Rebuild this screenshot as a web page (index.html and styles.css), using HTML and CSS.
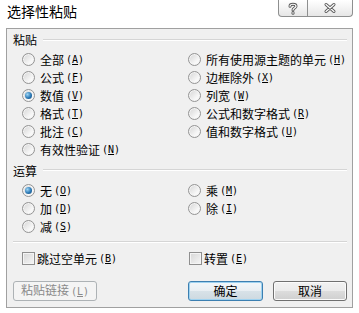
FILE: index.html
```html
<!DOCTYPE html>
<html lang="zh-CN">
<head>
    <meta charset="UTF-8">
    <title>选择性粘贴</title>
    <link rel="stylesheet" href="styles.css">
</head>
<body>
    <div class="window">
        <div class="titlebar">
            <span class="title">选择性粘贴</span>
            <div class="caption">
                <div class="cap cap-help">
                    <svg width="12" height="13" viewBox="0 0 12 13">
                        <path class="ol" d="M3 4.2 C3 1.6 9 1.6 9 4.2 C9 6 6 6 6 8" />
                        <path class="in" d="M3 4.2 C3 1.6 9 1.6 9 4.2 C9 6 6 6 6 8" />
                        <path class="ol" d="M6 10.6 v0.6" />
                        <path class="in" d="M6 10.6 v0.6" />
                    </svg>
                </div>
                <div class="cap cap-close">
                    <svg width="14" height="12" viewBox="0 0 14 12">
                        <path class="ol" d="M3 2.5 L11 9.5 M11 2.5 L3 9.5" />
                        <path class="in" d="M3 2.5 L11 9.5 M11 2.5 L3 9.5" />
                    </svg>
                </div>
            </div>
        </div>

        <div class="panel">
            <div class="group-head"><span>粘贴</span></div>
            <div class="options">
                <label class="opt"><span class="radio"></span>全部<span class="key">(<u>A</u>)</span></label>
                <label class="opt"><span class="radio"></span>所有使用源主题的单元<span class="key">(<u>H</u>)</span></label>
                <label class="opt"><span class="radio"></span>公式<span class="key">(<u>F</u>)</span></label>
                <label class="opt"><span class="radio"></span>边框除外<span class="key">(<u>X</u>)</span></label>
                <label class="opt"><span class="radio checked"></span>数值<span class="key">(<u>V</u>)</span></label>
                <label class="opt"><span class="radio"></span>列宽<span class="key">(<u>W</u>)</span></label>
                <label class="opt"><span class="radio"></span>格式<span class="key">(<u>T</u>)</span></label>
                <label class="opt"><span class="radio"></span>公式和数字格式<span class="key">(<u>R</u>)</span></label>
                <label class="opt"><span class="radio"></span>批注<span class="key">(<u>C</u>)</span></label>
                <label class="opt"><span class="radio"></span>值和数字格式<span class="key">(<u>U</u>)</span></label>
                <label class="opt"><span class="radio"></span>有效性验证<span class="key">(<u>N</u>)</span></label>
            </div>

            <div class="group-head second"><span>运算</span></div>
            <div class="options">
                <label class="opt"><span class="radio checked"></span>无<span class="key">(<u>O</u>)</span></label>
                <label class="opt"><span class="radio"></span>乘<span class="key">(<u>M</u>)</span></label>
                <label class="opt"><span class="radio"></span>加<span class="key">(<u>D</u>)</span></label>
                <label class="opt"><span class="radio"></span>除<span class="key">(<u>I</u>)</span></label>
                <label class="opt"><span class="radio"></span>减<span class="key">(<u>S</u>)</span></label>
            </div>

            <div class="divider"></div>

            <div class="options checks">
                <label class="opt"><span class="check"></span>跳过空单元<span class="key">(<u>B</u>)</span></label>
                <label class="opt"><span class="check"></span>转置<span class="key">(<u>E</u>)</span></label>
            </div>

            <div class="actions">
                <button class="btn disabled" disabled>粘贴链接<span class="key">(<u>L</u>)</span></button>
                <span class="spacer"></span>
                <button class="btn default ok">确定</button>
                <button class="btn cancel">取消</button>
            </div>
        </div>
    </div>
</body>
</html>
```

FILE: styles.css
```css
body {
    margin: 0;
    background-color: #fff;
    font-family: "Noto Sans CJK SC", "Liberation Sans", sans-serif;
    font-size: 12px;
    color: #000;
}

.window {
    width: 359px;
    height: 313px;
}

.titlebar {
    height: 28px;
    display: flex;
    justify-content: space-between;
    align-items: flex-start;
}

.title {
    padding-left: 7px;
    font-size: 14px;
    line-height: 23px;
}

.caption {
    display: flex;
    margin-right: 6px;
}

.cap {
    height: 17px;
    display: flex;
    align-items: center;
    justify-content: center;
    border: 1px solid #8e8f8f;
    border-top: none;
    background: linear-gradient(#ffffff, #f3f3f3 50%, #e6e6e6);
    box-sizing: border-box;
}

.cap-help {
    width: 30px;
    border-radius: 0 0 0 4px;
}

.cap-close {
    width: 45px;
    border-left: none;
    border-radius: 0 0 4px 0;
}

.cap svg {
    display: block;
}

.cap .ol {
    fill: none;
    stroke: #5a5a5a;
    stroke-width: 3;
    stroke-linecap: round;
}

.cap .in {
    fill: none;
    stroke: #fff;
    stroke-width: 1.2;
    stroke-linecap: round;
}

.panel {
    margin: 0 6px;
    height: 280px;
    box-sizing: border-box;
    border: 1px solid #a0a0a0;
    background-color: #f0f0f0;
    padding: 0 5px 0 6px;
}

.group-head {
    height: 21px;
    display: flex;
    align-items: center;
    gap: 6px;
}

.group-head::after {
    content: "";
    flex: 1;
    border-top: 1px solid #d5d5d5;
    border-bottom: 1px solid #fff;
    margin-right: 0;
}

.group-head.second {
    height: 22px;
    margin-top: 1px;
}

.options {
    display: grid;
    grid-template-columns: 166px 1fr;
    grid-auto-rows: 18px;
    padding-left: 9px;
}

.opt {
    display: flex;
    align-items: center;
    white-space: nowrap;
}

.key {
    font-family: "DejaVu Sans Mono", monospace;
    font-size: 10px;
    margin-left: 2px;
}

.radio {
    width: 13px;
    height: 13px;
    box-sizing: border-box;
    border-radius: 50%;
    border: 1px solid #949494;
    background: linear-gradient(135deg, #d4d4d4, #f8f8f8 70%);
    box-shadow: inset 0 0 0 1px #f4f4f4;
    margin-right: 5px;
    position: relative;
}

.radio.checked::after {
    content: "";
    position: absolute;
    left: 2px;
    top: 2px;
    width: 7px;
    height: 7px;
    border-radius: 50%;
    background: radial-gradient(circle at 35% 35%, #9fd6f5, #2a78b5 55%, #18466f);
}

.divider {
    margin: 6px 0 6px;
    border-top: 1px solid #d5d5d5;
    border-bottom: 1px solid #fff;
}

.checks .opt:last-child {
    padding-left: 1px;
}

.check {
    width: 13px;
    height: 13px;
    box-sizing: border-box;
    border: 1px solid #8f8f8f;
    background: linear-gradient(135deg, #d6d6d6, #f6f6f6);
    box-shadow: inset 0 0 0 1px #f4f4f4;
    margin-right: 2px;
}

.actions {
    display: flex;
    align-items: center;
    margin-top: 14px;
}

.spacer {
    flex: 1;
}

.btn {
    height: 20px;
    box-sizing: border-box;
    border: 1px solid #707070;
    border-radius: 3px;
    font-family: "Noto Sans CJK SC", sans-serif;
    font-size: 12px;
    line-height: 16px;
    padding: 0;
    color: #000;
    background: linear-gradient(#f2f2f2, #ebebeb 50%, #dddddd 50%, #cfcfcf);
    box-shadow: inset 0 0 0 1px #fbfbfb;
}

.btn.disabled {
    width: 84px;
    border-color: #adb2b5;
    background: #f4f4f4;
    color: #8a8a8a;
    box-shadow: none;
}

.btn.ok {
    width: 75px;
    border-color: #3c7fb1;
    background: linear-gradient(#f2f7fa, #e8eef2 50%, #d8e2e8 50%, #cdd9e0);
    box-shadow: inset 0 0 0 1px #9ed2f0;
}

.btn.cancel {
    width: 74px;
    margin-left: 10px;
}
```
